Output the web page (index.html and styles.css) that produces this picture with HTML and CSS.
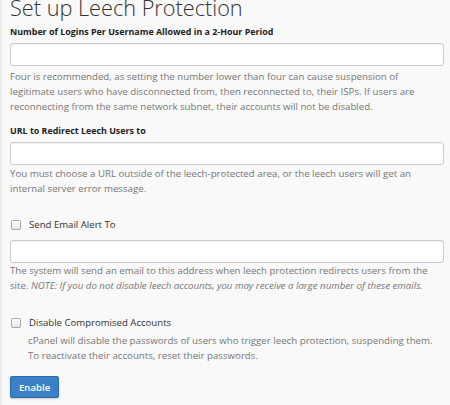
FILE: index.html
```html
<!DOCTYPE html>
<html>
<head>
<meta charset="utf-8">
<link rel="stylesheet" href="styles.css">
</head>
<body>
<div class="page">
  <h1 class="title">Set up Leech Protection</h1>

  <div class="group group-logins">
    <label class="label">Number of Logins Per Username Allowed in a 2-Hour Period</label>
    <input class="field" type="text">
    <p class="help help-first">Four is recommended, as setting the number lower than four can cause suspension of legitimate users who have disconnected from, then reconnected to, their ISPs. If users are reconnecting from the same network subnet, their accounts will not be disabled.</p>
  </div>

  <div class="group group-url">
    <label class="label">URL to Redirect Leech Users to</label>
    <input class="field" type="text">
    <p class="help">You must choose a URL outside of the leech-protected area, or the leech users will get an internal server error message.</p>
  </div>

  <div class="group group-check">
    <label class="check"><span class="box"></span>Send Email Alert To</label>
    <input class="field field-check" type="text">
    <p class="help tight">The system will send an email to this address when leech protection redirects users from the site. <em>NOTE: If you do not disable leech accounts, you may receive a large number of these emails.</em></p>
  </div>

  <div class="group group-disable">
    <label class="check"><span class="box"></span>Disable Compromised Accounts</label>
    <p class="help indent">cPanel will disable the passwords of users who trigger leech protection, suspending them. To reactivate their accounts, reset their passwords.</p>
  </div>

  <button class="btn" type="button">Enable</button>
</div>
</body>
</html>
```

FILE: styles.css
```css
html, body {
  margin: 0;
  padding: 0;
  height: 100%;
}
body {
  background: #f9f9f9;
  font-family: "Open Sans", "DejaVu Sans", sans-serif;
  color: #333;
  border-left: 2px solid #ececec;
  box-sizing: border-box;
  overflow: hidden;
}
.page {
  padding: 0 6px 0 8px;
}
.title {
  font-weight: 300;
  font-size: 21.7px;
  line-height: 24px;
  margin: -4px 0 0 0;
  color: #333;
}
.group {
  margin: 0;
}
.group.group-logins {
  margin-top: 5px;
}
.label {
  display: block;
  font-weight: 700;
  font-size: 8.9px;
  line-height: 14px;
  color: #222;
}
.field {
  display: block;
  box-sizing: border-box;
  width: 100%;
  height: 23px;
  margin-top: 4px;
  background: #fff;
  border: 1px solid #ccc;
  border-radius: 3px;
  box-shadow: inset 0 1px 1px rgba(0,0,0,0.06);
  padding: 0 6px;
}
.field.field-check {
  margin-top: 8px;
}
.help {
  font-size: 9.7px;
  line-height: 15px;
  color: #777;
  margin: 1px 0 0 0;
}
.help.help-first {
  margin-top: 3px;
}
.help.tight {
  margin-top: 0;
}
.help.indent {
  margin: 3px 0 0 18px;
}
.group.group-url {
  margin-top: 10px;
}
.group.group-check {
  margin-top: 22px;
}
.group.group-disable {
  margin-top: 23px;
}
.check {
  display: flex;
  align-items: center;
  font-size: 9.6px;
  line-height: 14px;
  color: #333;
}
.box {
  width: 8px;
  height: 8px;
  border: 1px solid #a9a9a9;
  border-radius: 2px;
  background: linear-gradient(#fdfdfd, #e6e6e6);
  margin: 0 8px 0 1px;
  flex: none;
}
.btn {
  display: block;
  margin-top: 13px;
  font-family: inherit;
  font-size: 9.6px;
  font-weight: 600;
  color: #fff;
  background: #3a80c7;
  border: 1px solid #2c6aa8;
  border-radius: 2px;
  height: 22px;
  padding: 0 8px;
  box-shadow: 0 1px 2px rgba(0,0,0,0.2);
}
```
